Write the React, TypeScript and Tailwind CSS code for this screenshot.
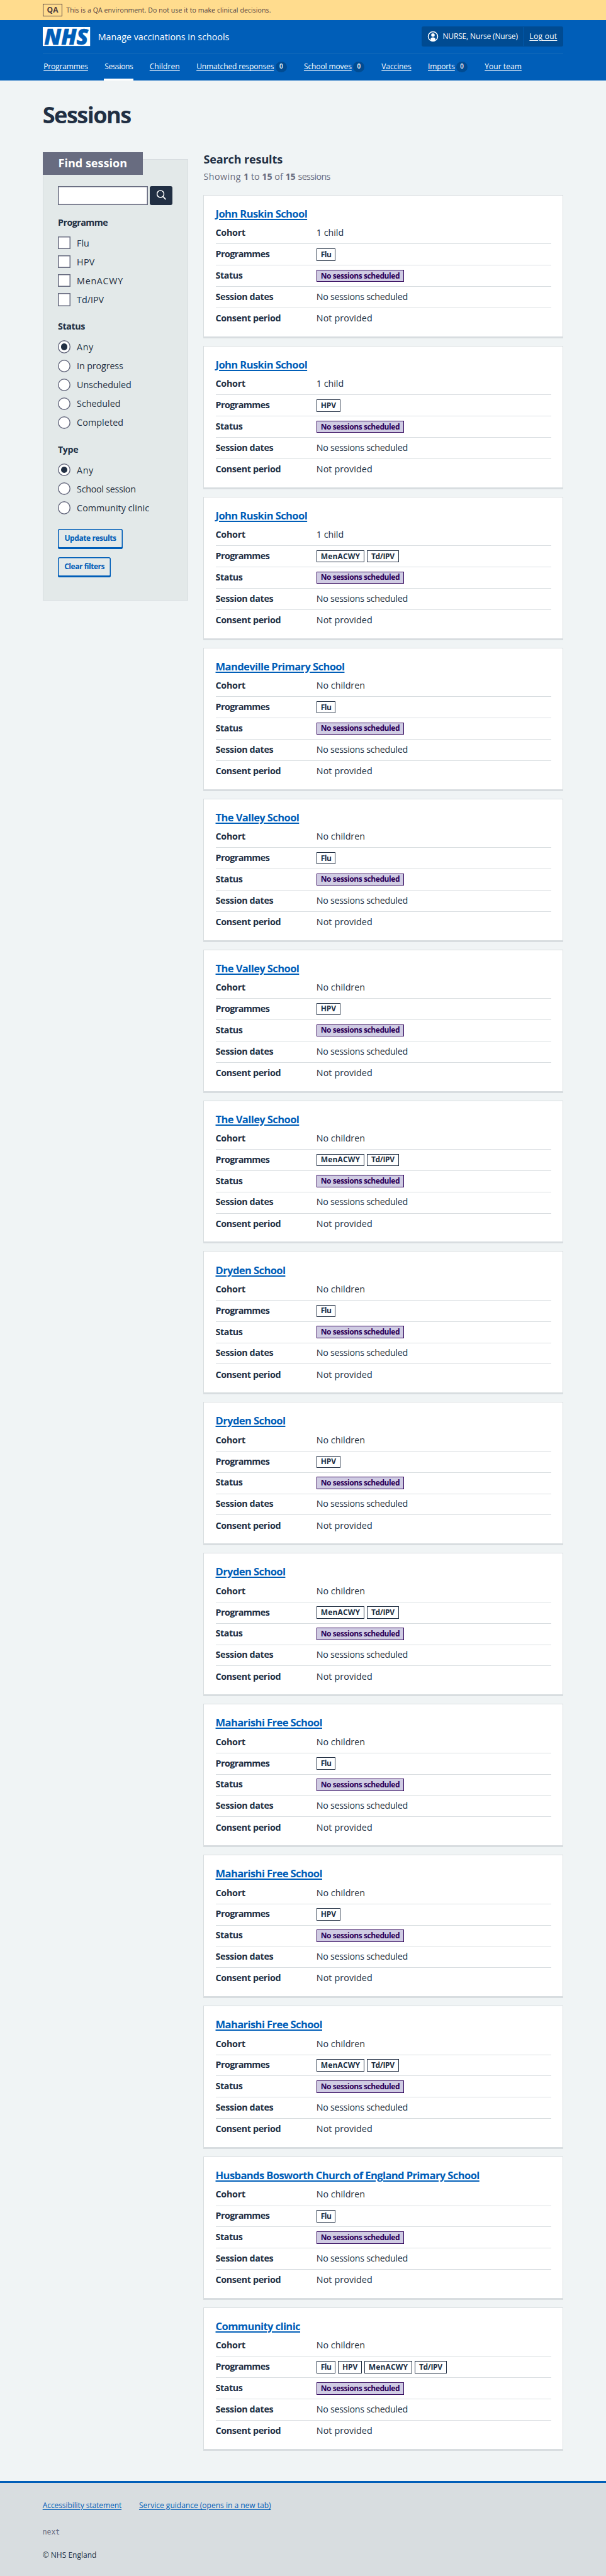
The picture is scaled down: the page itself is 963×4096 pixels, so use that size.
import React from "react";
import clsx from "clsx";

/* The whole page is sized in rem, so the root size sets its scale. */
const rootScale = "html{font-size:12.0375px}";

type Label = { text: string; tracking: string };

const navItems: (Label & { width: string; count?: number; current?: boolean })[] = [
  { text: "Programmes", tracking: "tracking-[-0.0134em]", width: "w-24.25" },
  { text: "Sessions", tracking: "tracking-[-0.032em]", width: "w-15.75", current: true },
  { text: "Children", tracking: "tracking-[0.007em]", width: "w-16.75" },
  { text: "Unmatched responses", tracking: "tracking-[-0.013em]", width: "w-48.75", count: 0 },
  { text: "School moves", tracking: "tracking-[-0.009em]", width: "w-33", count: 0 },
  { text: "Vaccines", tracking: "tracking-[-0.0095em]", width: "w-16.5" },
  { text: "Imports", tracking: "tracking-[-0.014em]", width: "w-22", count: 0 },
  { text: "Your team", tracking: "tracking-[0.004em]", width: "w-20.25" },
];

const programmeOptions: Label[] = [
  { text: "Flu", tracking: "tracking-normal" },
  { text: "HPV", tracking: "tracking-[0.02em]" },
  { text: "MenACWY", tracking: "tracking-[0.05em]" },
  { text: "Td/IPV", tracking: "tracking-normal" },
];

const statusOptions: Label[] = [
  { text: "Any", tracking: "tracking-[0.04em]" },
  { text: "In progress", tracking: "tracking-[-0.0075em]" },
  { text: "Unscheduled", tracking: "tracking-[-0.0064em]" },
  { text: "Scheduled", tracking: "tracking-normal" },
  { text: "Completed", tracking: "tracking-[0.008em]" },
];

const typeOptions: Label[] = [
  { text: "Any", tracking: "tracking-[0.04em]" },
  { text: "School session", tracking: "tracking-[-0.0187em]" },
  { text: "Community clinic", tracking: "tracking-[0.0028em]" },
];

const tagTracking: Record<string, string> = {
  Flu: "tracking-[-0.046em]",
  HPV: "tracking-[-0.015em]",
  MenACWY: "tracking-[0.011em]",
  "Td/IPV": "tracking-[-0.0286em]",
};

const sessions: { name: string; cohort: string; programmes: string[] }[] = [
  { name: "John Ruskin School", cohort: "1 child", programmes: ["Flu"] },
  { name: "John Ruskin School", cohort: "1 child", programmes: ["HPV"] },
  { name: "John Ruskin School", cohort: "1 child", programmes: ["MenACWY", "Td/IPV"] },
  { name: "Mandeville Primary School", cohort: "No children", programmes: ["Flu"] },
  { name: "The Valley School", cohort: "No children", programmes: ["Flu"] },
  { name: "The Valley School", cohort: "No children", programmes: ["HPV"] },
  { name: "The Valley School", cohort: "No children", programmes: ["MenACWY", "Td/IPV"] },
  { name: "Dryden School", cohort: "No children", programmes: ["Flu"] },
  { name: "Dryden School", cohort: "No children", programmes: ["HPV"] },
  { name: "Dryden School", cohort: "No children", programmes: ["MenACWY", "Td/IPV"] },
  { name: "Maharishi Free School", cohort: "No children", programmes: ["Flu"] },
  { name: "Maharishi Free School", cohort: "No children", programmes: ["HPV"] },
  { name: "Maharishi Free School", cohort: "No children", programmes: ["MenACWY", "Td/IPV"] },
  {
    name: "Husbands Bosworth Church of England Primary School",
    cohort: "No children",
    programmes: ["Flu"],
  },
  {
    name: "Community clinic",
    cohort: "No children",
    programmes: ["Flu", "HPV", "MenACWY", "Td/IPV"],
  },
];

function NhsLogo() {
  return (
    <svg viewBox="0 0 100 40" className="h-10 w-25 shrink-0 overflow-visible">
      <rect width="100" height="40" fill="#fff" />
      <text
        x="3"
        y="36.8"
        textLength="93"
        lengthAdjust="spacingAndGlyphs"
        fill="#005eb8"
        stroke="#005eb8"
        strokeWidth="0.8"
        fontFamily="'Open Sans', sans-serif"
        fontSize="47.5"
        fontWeight="800"
        fontStyle="italic"
      >
        NHS
      </text>
    </svg>
  );
}

function UserIcon() {
  return (
    <svg viewBox="0 0 24 24" className="size-6 shrink-0">
      <circle cx="12" cy="12" r="10" fill="none" stroke="#fff" strokeWidth="2" />
      <circle cx="12" cy="9" r="3.7" fill="#fff" />
      <path d="M7 21v-3.2a4 4 0 0 1 4-4h2a4 4 0 0 1 4 4V21a10.500 10.500 0 0 1-10 0z" fill="#fff" />
    </svg>
  );
}

function Header() {
  return (
    <header className="bg-[#005eb8] text-white">
      <div className="mx-auto w-275">
        <div className="flex h-18 items-center justify-between border-b border-[#136aba]">
          <div className="flex items-center">
            <NhsLogo />
            <span className="ml-4.25 text-[1.1875rem] leading-7">Manage vaccinations in schools</span>
          </div>
          <div className="flex h-10.5 w-75 items-center rounded-[3px] bg-[#004b92]">
            <span className="ml-3.25 flex">
              <UserIcon />
            </span>
            <span className="ml-2 w-42.75 text-[1rem] leading-6 tracking-[-0.013em] whitespace-nowrap">
              NURSE, Nurse (Nurse)
            </span>
            <span className="h-10 w-px bg-[#005eb8]" />
            <a className="ml-2.75 text-[1rem] leading-6 tracking-[0.025em] whitespace-nowrap underline underline-offset-2">
              Log out
            </a>
          </div>
        </div>
        <nav className="flex h-14 gap-8">
          {navItems.map((item) => (
            <div
              key={item.text}
              className={clsx("relative flex shrink-0 items-center pb-0.25 pl-0.5 whitespace-nowrap", item.width)}
            >
              <a
                className={clsx(
                  "text-[1rem] leading-6",
                  item.tracking,
                  !item.current && "underline underline-offset-2",
                )}
              >
                {item.text}
              </a>
              {item.count !== undefined && (
                <span className="mr-0.5 ml-auto flex h-5.5 w-6 items-center justify-center rounded-full bg-[#004b92] text-[0.8125rem] font-semibold">
                  {item.count}
                </span>
              )}
              {item.current && <span className="absolute inset-x-0 bottom-0 h-[3px] bg-white" />}
            </div>
          ))}
        </nav>
      </div>
    </header>
  );
}

function Checkbox({ label }: { label: Label }) {
  return (
    <div className="flex h-10 items-center">
      <span className="size-6.75 bg-white inset-ring-[1.5px] inset-ring-[#686c80]" />
      <span className={clsx("ml-3.25 text-[1.1875rem] leading-7", label.tracking)}>{label.text}</span>
    </div>
  );
}

function Radio({ label, checked }: { label: Label; checked?: boolean }) {
  return (
    <div className="flex h-10 items-center">
      <span className="flex size-6.75 items-center justify-center rounded-full bg-white inset-ring-[1.5px] inset-ring-[#686c80]">
        {checked && <span className="size-3.5 rounded-full bg-[#212f43]" />}
      </span>
      <span className={clsx("ml-3.25 text-[1.1875rem] leading-7", label.tracking)}>{label.text}</span>
    </div>
  );
}

function Legend({ children, tracking }: { children: string; tracking: string }) {
  return (
    <div className={clsx("mt-5.5 mb-2.5 text-[1.1875rem] leading-7 font-bold", tracking)}>{children}</div>
  );
}

function FilterButton({ children, className }: { children: string; className: string }) {
  return (
    <button
      className={clsx(
        "flex h-10.75 items-center justify-center rounded-[3px] pb-0.25 text-[1rem] leading-6 font-bold whitespace-nowrap text-[#005eb8] shadow-[inset_0_0_0_1.5px_#005eb8,inset_0_-3px_0_#005eb8]",
        className,
      )}
    >
      {children}
    </button>
  );
}

function Filters() {
  return (
    <aside className="mt-4 h-233.5 w-77 shrink-0 border border-[#d8dde0] bg-[#e3e9e9]">
      <h2 className="-mt-4 -ml-px flex h-12 w-53 items-center bg-[#686c80] pb-0.5 pl-8.25 text-[1.5rem] leading-8 font-bold text-white">
        Find session
      </h2>
      <div className="pt-6 pl-7.75">
        <div className="flex gap-1">
          <input className="h-10 w-47.5 bg-white inset-ring-[1.5px] inset-ring-[#686c80]" />
          <button className="flex h-10 w-12 items-center justify-center rounded-[3px] bg-[#212f43]">
            <svg viewBox="0 0 24 24" className="mb-0.5 size-6" fill="none" stroke="#fff" strokeLinecap="round">
              <circle cx="10.700" cy="10" r="7.300" strokeWidth="2" />
              <path d="m16.200 15.500 5 5.200" strokeWidth="2.400" />
            </svg>
          </button>
        </div>
        <Legend tracking="tracking-[-0.038em]">Programme</Legend>
        {programmeOptions.map((o) => (
          <Checkbox key={o.text} label={o} />
        ))}
        <Legend tracking="tracking-[-0.03em]">Status</Legend>
        {statusOptions.map((o, i) => (
          <Radio key={o.text} label={o} checked={i === 0} />
        ))}
        <Legend tracking="tracking-[-0.03em]">Type</Legend>
        {typeOptions.map((o, i) => (
          <Radio key={o.text} label={o} checked={i === 0} />
        ))}
        <FilterButton className="mt-6 w-34.25 tracking-[-0.036em]">Update results</FilterButton>
        <FilterButton className="mt-4.25 w-28 tracking-[-0.039em]">Clear filters</FilterButton>
      </div>
    </aside>
  );
}

function Row({
  label,
  tracking,
  last,
  children,
}: {
  label: string;
  tracking: string;
  last?: boolean;
  children: React.ReactNode;
}) {
  return (
    <div className={clsx("flex h-11.25 items-center pb-0.75", !last && "border-b border-[#d8dde0]")}>
      <dt className={clsx("w-53.25 shrink-0 font-bold", tracking)}>{label}</dt>
      <dd className="flex gap-1.25">{children}</dd>
    </div>
  );
}

function Tag({ children, className }: { children: string; className: string }) {
  return (
    <span
      className={clsx(
        "mt-0.75 flex h-6.5 items-center border px-2 text-[1rem] leading-6 font-bold whitespace-nowrap",
        className,
      )}
    >
      {children}
    </span>
  );
}

function SessionCard({ session }: { session: (typeof sessions)[number] }) {
  return (
    <article className="h-75.75 border border-b-3 border-[#d8dde0] bg-white px-6 text-[1.1875rem] leading-7">
      <h3 className="h-14.5 pt-6 text-[1.375rem] leading-7 font-bold tracking-[-0.036em] text-[#005eb8]">
        <a className="underline decoration-[1.5px] underline-offset-[2px]">{session.name}</a>
      </h3>
      <dl>
        <Row label="Cohort" tracking="tracking-[-0.018em]">
          {session.cohort}
        </Row>
        <Row label="Programmes" tracking="tracking-[-0.037em]">
          {session.programmes.map((p) => (
            <Tag key={p} className={clsx("border-[#212f43] bg-white", tagTracking[p])}>
              {p}
            </Tag>
          ))}
        </Row>
        <Row label="Status" tracking="tracking-[-0.03em]">
          <Tag className="border-[#2c0058] bg-[#d0cce3] tracking-[-0.036em] text-[#2c0058]">
            No sessions scheduled
          </Tag>
        </Row>
        <Row label="Session dates" tracking="tracking-[-0.024em]">
          <span className="tracking-[-0.0206em]">No sessions scheduled</span>
        </Row>
        <Row label="Consent period" tracking="tracking-[-0.0235em]" last>
          <span className="tracking-[0.009em]">Not provided</span>
        </Row>
      </dl>
    </article>
  );
}

export default function App() {
  return (
    <div className="h-[4096px] overflow-hidden bg-[#f0f4f5] font-['Open_Sans','Noto_Sans',sans-serif] text-[#212f43]">
      <style>{rootScale}</style>
      <div className="h-10.5 bg-[#ffdc8e] text-[#4f3c41]">
        <div className="mx-auto flex h-full w-275 items-center">
          <span className="flex h-6.5 w-10.5 items-center justify-center border border-[#4f3c41] text-[1rem] leading-6 font-bold">
            QA
          </span>
          <span className="ml-2 text-[0.875rem] leading-6 tracking-[0.008em]">
            This is a QA environment. Do not use it to make clinical decisions.
          </span>
        </div>
      </div>
      <Header />
      <main className="mx-auto h-1268.5 w-275 pt-11">
        <h1 className="text-[3rem] leading-14 font-bold tracking-[-0.042em]">Sessions</h1>
        <div className="mt-12.5 flex items-start gap-8">
          <Filters />
          <section className="w-190">
            <div className="h-23">
              <h2 className="text-[1.5rem] leading-8 font-bold tracking-[-0.008em]">Search results</h2>
              <p className="mt-1.75 text-[1.1875rem] leading-7 text-[#686c80]">
                <span className="tracking-[0.03em]">Showing </span>
                <b>1</b> to <b>15</b> of <b>15</b> <span className="tracking-[-0.043em]">sessions</span>
              </p>
            </div>
            <div className="flex flex-col gap-[0.996rem]">
              {sessions.map((s, i) => (
                <SessionCard key={i} session={s} />
              ))}
            </div>
          </section>
        </div>
      </main>
      <footer className="h-50 border-t-3 border-[#005eb8] bg-[#d8dde0]">
        <div className="mx-auto w-275 pt-8.75 text-[1rem] leading-6">
          <div className="flex gap-9.25 text-[#005eb8]">
            <a className="tracking-[-0.0074em] underline underline-offset-2">Accessibility statement</a>
            <a className="underline underline-offset-2">Service guidance (opens in a new tab)</a>
          </div>
          <p className="mt-8.25 font-['DejaVu_Sans_Mono',monospace] text-[0.95rem] leading-6 text-[#686c80]">next</p>
          <p className="mt-6">© NHS England</p>
        </div>
      </footer>
    </div>
  );
}
